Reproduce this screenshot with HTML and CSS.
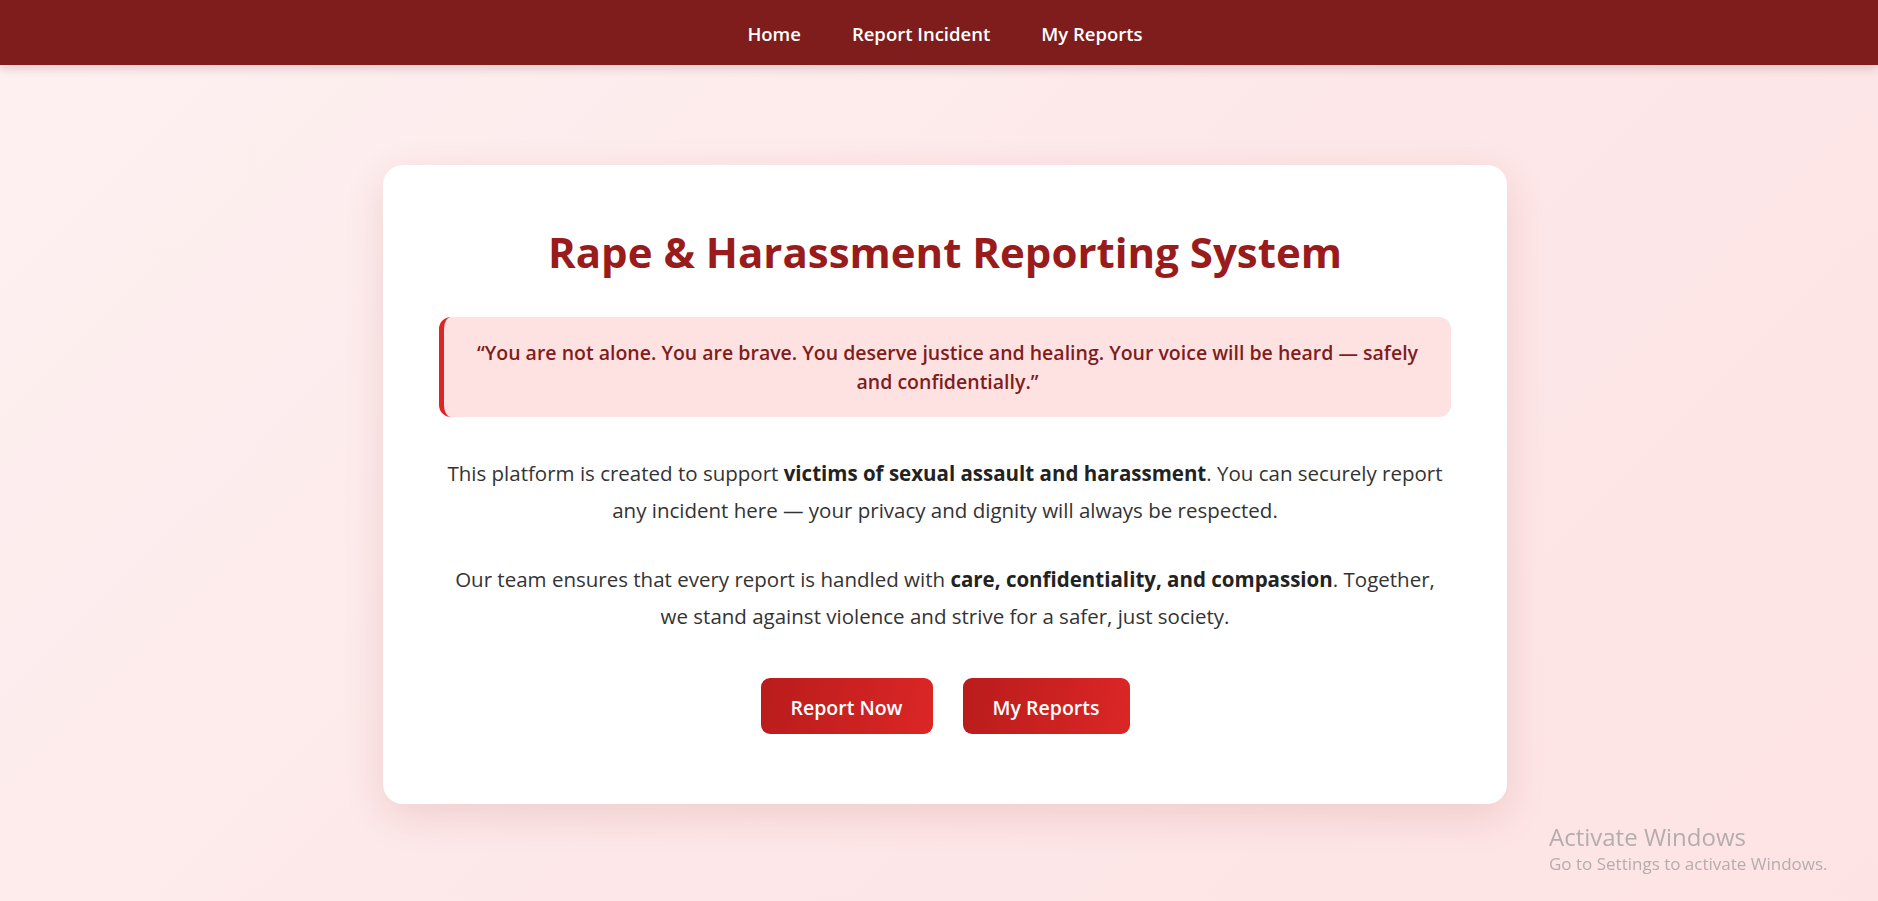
FILE: index.html
```html
<!DOCTYPE html>
<html lang="en">
<head>
<meta charset="utf-8">
<title>Rape &amp; Harassment Reporting System</title>
<link rel="stylesheet" href="styles.css">
</head>
<body>
<nav class="navbar">
  <ul class="nav-links">
    <li><a href="#">Home</a></li>
    <li><a href="#">Report Incident</a></li>
    <li><a href="#">My Reports</a></li>
  </ul>
</nav>
<main class="main">
  <section class="card">
    <h1 class="title">Rape &amp; Harassment Reporting System</h1>
    <blockquote class="quote">“You are not alone. You are brave. You deserve justice and healing. Your voice will be heard — safely and confidentially.”</blockquote>
    <p class="text">This platform is created to support <strong>victims of sexual assault and harassment</strong>. You can securely report any incident here — your privacy and dignity will always be respected.</p>
    <p class="text">Our team ensures that every report is handled with <strong>care, confidentiality, and compassion</strong>. Together, we stand against violence and strive for a safer, just society.</p>
    <div class="actions">
      <a class="btn btn-report" href="#">Report Now</a>
      <a class="btn btn-mine" href="#">My Reports</a>
    </div>
  </section>
</main>
<div class="activate">
  <div class="activate-title">Activate Windows</div>
  <div class="activate-sub">Go to Settings to activate Windows.</div>
</div>
</body>
</html>
```
FILE: styles.css
```css
* { box-sizing: border-box; }
html, body { height: 100%; }
body {
  margin: 0;
  font-family: "Open Sans", "Noto Sans", "Liberation Sans", sans-serif;
  background: linear-gradient(135deg, #fef1f1 0%, #fde8e9 50%, #fde3e4 100%);
  color: #333;
  min-height: 901px;
}
.navbar {
  height: 65px;
  background: #7f1d1d;
  box-shadow: 0 3px 10px rgba(80, 10, 10, 0.18);
  display: flex;
  align-items: center;
  justify-content: center;
  padding: 2px 0 0 12px;
}
.nav-links {
  list-style: none;
  margin: 0;
  padding: 0;
  display: flex;
  gap: 51px;
}
.nav-links a {
  color: #ffffff;
  text-decoration: none;
  font-weight: 600;
  font-size: 18.5px;
}
.main {
  display: flex;
  justify-content: center;
  padding: 100px 0 0 12px;
}
.card {
  width: 1124px;
  height: 639px;
  background: #ffffff;
  border-radius: 20px;
  box-shadow: 0 12px 40px rgba(150, 30, 30, 0.13);
  padding: 56px 56px;
  text-align: center;
}
.title {
  margin: 5px 0 39px;
  font-size: 42px;
  line-height: 52px;
  font-weight: 700;
  color: #991b1b;
}
.quote {
  margin: 0;
  background: #fee2e2;
  border-left: 5px solid #dc2626;
  border-radius: 12px;
  padding: 21px 28px;
  font-size: 19.5px;
  line-height: 29px;
  font-weight: 600;
  color: #7f1d1d;
}
.text {
  margin: 38px 0 0;
  font-size: 20.5px;
  line-height: 37px;
  color: #333333;
}
.text + .text { margin-top: 32px; }
.text strong { font-weight: 700; color: #222; }
.actions {
  display: flex;
  justify-content: center;
  gap: 30px;
  margin-top: 43px;
}
.btn {
  display: flex;
  align-items: center;
  justify-content: center;
  height: 56px;
  border-radius: 9px;
  background: linear-gradient(100deg, #b91c1c 0%, #dc2626 100%);
  color: #ffffff;
  text-decoration: none;
  font-weight: 600;
  font-size: 19.5px;
  padding-top: 2px;
}
.btn-report { width: 172px; }
.btn-mine { width: 167px; }
.activate {
  position: fixed;
  left: 1549px;
  top: 821px;
  color: #b5adad;
  font-family: "Open Sans", "Noto Sans", sans-serif;
  pointer-events: none;
}
.activate-title { font-size: 24px; line-height: 31px; }
.activate-sub { font-size: 17px; line-height: 22px; margin-top: 1px; }
```
